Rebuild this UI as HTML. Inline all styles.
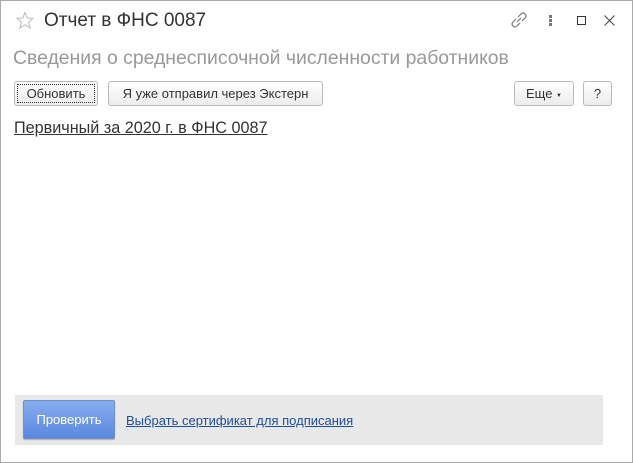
<!DOCTYPE html>
<html><head><meta charset="utf-8"><style>
*{margin:0;padding:0;box-sizing:border-box}
body{width:633px;height:463px;background:#fff;font-family:"Liberation Sans",Arial,sans-serif;position:relative;overflow:hidden}
.frame{position:absolute;left:0;top:0;width:633px;height:463px;border:1px solid #aaa}
.abs{position:absolute;white-space:nowrap}
.title{left:44px;top:10px;font-size:19px;color:#333}
.sub{left:13px;top:47px;font-size:19.4px;color:#999}
.btn{position:absolute;top:81px;height:25px;border:1px solid #bbb;border-radius:3px;background:linear-gradient(#fff,#ececec);font-size:13px;color:#333;text-align:center;line-height:23px}
.link1{left:14px;top:119px;font-size:16.2px;color:#333;text-decoration:underline}
.panel{left:15px;top:395px;width:588px;height:50px;background:#e8e8e8}
.pb{left:23px;top:400px;width:92px;height:39px;background:linear-gradient(#87aef0,#5a87e0);border:1px solid #6d8fcc;border-radius:2px;color:#fff;font-size:13px;text-align:center;line-height:37px;box-shadow:0 1px 1px rgba(0,0,0,.25)}
.link2{left:126px;top:413px;font-size:13px;color:#1c4ea0;text-decoration:underline}
</style></head><body>
<div class="frame"></div>
<svg class="abs" style="left:15px;top:11px" width="20" height="19" viewBox="0 0 20 19"><polygon points="10,1.5 12.2,7 18,7.3 13.5,11.2 15.2,17 10,13.8 4.8,17 6.5,11.2 2,7.3 7.8,7" fill="none" stroke="#bbb" stroke-width="1"/></svg>
<div class="abs title">Отчет в ФНС 0087</div>
<svg class="abs" style="left:510px;top:11px" width="18" height="18" viewBox="0 0 18 18" fill="none" stroke="#777" stroke-width="1.2"><path d="M8 6 L11 3 Q13 1 15 3 Q17 5 15 7 L12 10"/><path d="M10 12 L7 15 Q5 17 3 15 Q1 13 3 11 L6 8"/><path d="M7 11 L11 7"/></svg>
<div class="abs" style="left:549px;top:15px;width:3px">
<div style="width:3px;height:3px;background:#777;margin-bottom:1px"></div><div style="width:3px;height:3px;background:#777;margin-bottom:1px"></div><div style="width:3px;height:3px;background:#777"></div></div>
<div class="abs" style="left:577px;top:16px;width:9px;height:9px;border:1px solid #333"></div>
<svg class="abs" style="left:604px;top:15px" width="11" height="11" viewBox="0 0 11 11" stroke="#444" stroke-width="1"><path d="M0.5 0.5 L10.5 10.5 M10.5 0.5 L0.5 10.5"/></svg>
<div class="abs sub">Сведения о среднесписочной численности работников</div>
<div class="btn" style="left:14px;width:84px;outline:1px dotted #333;outline-offset:-4px">Обновить</div>
<div class="btn" style="left:108px;width:215px">Я уже отправил через Экстерн</div>
<div class="btn" style="left:514px;width:60px">Еще <span style="font-size:6px;vertical-align:1px">▼</span></div>
<div class="btn" style="left:583px;width:29px">?</div>
<div class="abs link1">Первичный за 2020 г. в ФНС 0087</div>
<div class="abs panel"></div>
<div class="abs pb">Проверить</div>
<div class="abs link2">Выбрать сертификат для подписания</div>
</body></html>
